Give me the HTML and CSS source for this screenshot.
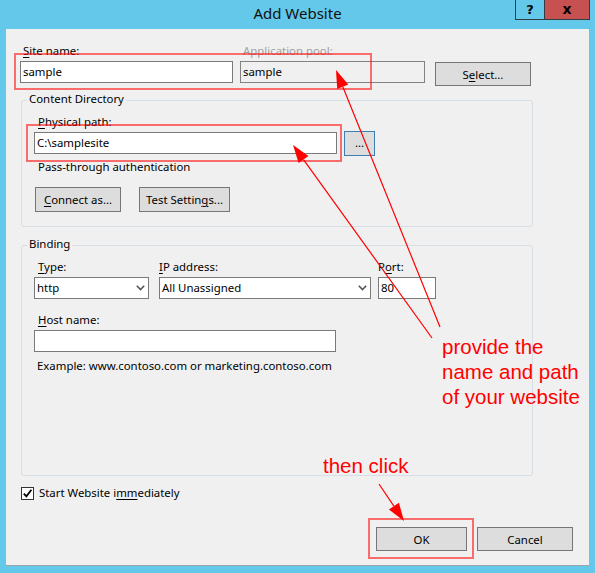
FILE: index.html
```html
<!DOCTYPE html>
<html>
<head>
<meta charset="utf-8">
<title>Add Website</title>
<link rel="stylesheet" href="styles.css">
</head>
<body>
<div class="window">
  <div class="titlebar">
    <div></div>
    <div class="title">Add Website</div>
    <div class="controls">
      <div class="help">?</div>
      <div class="close">x</div>
    </div>
  </div>
  <div class="client">
    <div class="toprow">
      <div class="col site">
        <div class="lbl"><u>S</u>ite name:</div>
        <div class="tb">sample</div>
      </div>
      <div class="col pool">
        <div class="lbl dis">Application pool:</div>
        <div class="tb tb-dis">sample</div>
      </div>
      <div class="btn select">S<u>e</u>lect...</div>
    </div>

    <div class="group content">
      <div class="gtitle">Content Directory</div>
      <div class="lbl lbl-in"><u>P</u>hysical path:</div>
      <div class="pathrow">
        <div class="tb path">C:\samplesite</div>
        <div class="btn browse">...</div>
      </div>
      <div class="note">Pass-through authentication</div>
      <div class="btnrow">
        <div class="btn connect"><u>C</u>onnect as...</div>
        <div class="btn test">Test Settin<u>g</u>s...</div>
      </div>
    </div>

    <div class="group binding">
      <div class="gtitle">Binding</div>
      <div class="bindrow">
        <div class="col type">
          <div class="lbl lbl-in"><u>T</u>ype:</div>
          <div class="tb dd">http<svg class="chev" width="9" height="6" viewBox="0 0 9 6"><polyline points="0.8,0.8 4.5,4.6 8.2,0.8" fill="none" stroke="#555" stroke-width="1.6"/></svg></div>
        </div>
        <div class="col ip">
          <div class="lbl"><u>I</u>P address:</div>
          <div class="tb dd">All Unassigned<svg class="chev" width="9" height="6" viewBox="0 0 9 6"><polyline points="0.8,0.8 4.5,4.6 8.2,0.8" fill="none" stroke="#555" stroke-width="1.6"/></svg></div>
        </div>
        <div class="col port">
          <div class="lbl">P<u>o</u>rt:</div>
          <div class="tb">80</div>
        </div>
      </div>
      <div class="lbl lbl-in host-lbl"><u>H</u>ost name:</div>
      <div class="tb host"></div>
      <div class="note example">Example: www.contoso.com or marketing.contoso.com</div>
    </div>

    <div class="checkrow">
      <div class="checkbox"><svg width="11" height="11" viewBox="0 0 11 11"><polyline points="1.8,5.6 4.4,8.4 9.4,1.8" fill="none" stroke="#000" stroke-width="1.8"/></svg></div>
      <div class="checklabel">Start Website i<u>mm</u>ediately</div>
    </div>

    <div class="footer">
      <div class="btn ok">OK</div>
      <div class="btn cancel">Cancel</div>
    </div>
  </div>
</div>

<svg class="annot" width="595" height="573" viewBox="0 0 595 573">
  <g fill="none" stroke="rgba(255,0,0,0.55)" stroke-width="2">
    <rect x="15" y="54" width="356" height="35"/>
    <rect x="27" y="125" width="314" height="36"/>
    <rect x="369" y="519" width="104" height="39"/>
  </g>
  <g stroke="#ff0000" stroke-width="1.2">
    <line x1="440" y1="327" x2="342.8" y2="86.7"/>
    <line x1="432" y1="338" x2="303.5" y2="159.6"/>
    <line x1="379" y1="484" x2="393.9" y2="506.1"/>
  </g>
  <g fill="#ff0000">
    <polygon points="336,70 348.3,84.4 337.2,89"/>
    <polygon points="293,145 308.4,156.1 298.6,163.1"/>
    <polygon points="404,521 398.9,502.7 388.9,509.5"/>
  </g>
</svg>
<div class="callout provide">provide the<br>name and path<br>of your website</div>
<div class="callout click">then click</div>
</body>
</html>
```

FILE: styles.css
```css
* {
  box-sizing: border-box;
}

body {
  margin: 0;
  width: 595px;
  height: 573px;
  overflow: hidden;
  position: relative;
  background: #63c8ea;
  font-family: "Noto Sans", "Open Sans", sans-serif;
  font-size: 11.4px;
  color: #000;
}

u {
  text-decoration: underline;
  text-underline-offset: 2px;
}

.titlebar {
  display: grid;
  grid-template-columns: 1fr auto 1fr;
  height: 29px;
}

.title {
  font-size: 15px;
  line-height: 26px;
  color: #111;
}

.controls {
  justify-self: end;
  display: flex;
  margin-right: 5px;
  height: 20px;
}

.help,
.close {
  height: 20px;
  border: 1px solid #2f3d44;
  border-top: none;
  display: flex;
  align-items: center;
  justify-content: center;
  font-family: "DejaVu Sans", sans-serif;
  font-weight: bold;
  font-size: 13px;
}

.help {
  width: 29px;
  border-right: none;
  background: #63c8ea;
}

.close {
  width: 46px;
  background: #c75050;
  font-size: 14px;
  padding-bottom: 2px;
}

.client {
  margin: 0 6px;
  height: 536px;
  background: #f0f0f0;
  padding-left: 14px;
  box-shadow: 0 1px 0 #9aa6ac;
}

.toprow {
  display: flex;
  align-items: flex-start;
  padding-top: 14px;
}

.lbl {
  height: 16px;
  line-height: 16px;
  padding-left: 3px;
  margin-bottom: 2px;
  white-space: nowrap;
}

.lbl.dis {
  color: #a0a0a0;
}

.tb {
  height: 22px;
  line-height: 20px;
  border: 1px solid #7a7a7a;
  background: #fff;
  padding-left: 2px;
  white-space: nowrap;
}

.tb.tb-dis {
  background: #f0f0f0;
  border-color: #838383;
}

.site {
  width: 213px;
}

.pool {
  width: 185px;
  margin-left: 7px;
}

.btn {
  display: flex;
  align-items: center;
  justify-content: center;
  background: #dddddd;
  border: 1px solid #767676;
  white-space: nowrap;
}

.select {
  width: 96px;
  height: 24px;
  margin: 19px 0 0 10px;
}

.group {
  margin-left: 1px;
  width: 512px;
  border: 1px solid #d5dfe5;
  border-radius: 3px;
  padding: 0 12px 14px 12px;
}

.gtitle {
  width: fit-content;
  margin: -10px 0 0 -7px;
  padding: 0 2px;
  line-height: 16px;
  background: #f0f0f0;
}

.content {
  margin-top: 14px;
}

.lbl-in {
  padding-left: 4px;
}

.content .lbl {
  margin-top: 7px;
  margin-bottom: 1px;
}

.pathrow {
  display: flex;
  align-items: flex-start;
}

.path {
  width: 303px;
  margin-top: 1px;
}

.browse {
  width: 31px;
  height: 25px;
  margin-left: 7px;
  border-color: #3c7fb1;
  padding-bottom: 3px;
}

.note {
  height: 16px;
  line-height: 16px;
  padding-left: 4px;
  margin-top: 3px;
  white-space: nowrap;
}

.btnrow {
  display: flex;
  gap: 18px;
  margin-top: 12px;
  padding-left: 1px;
}

.btnrow .btn {
  height: 25px;
}

.connect {
  width: 86px;
}

.test {
  width: 91px;
}

.binding {
  margin-top: 18px;
  height: 231px;
}

.bindrow {
  display: flex;
  align-items: flex-start;
  margin-top: 7px;
}

.type {
  width: 115px;
}

.ip {
  width: 212px;
  margin-left: 10px;
}

.ip .lbl,
.port .lbl {
  padding-left: 0;
}

.port {
  width: 58px;
  margin-left: 7px;
}

.dd {
  display: flex;
  align-items: center;
  justify-content: space-between;
  padding-right: 3px;
}

.chev {
  display: block;
}

.host-lbl {
  margin-top: 13px;
}

.host {
  width: 302px;
}

.example {
  margin-top: 6px;
  padding-left: 3px;
}

.checkrow {
  display: flex;
  align-items: center;
  height: 16px;
  margin-top: 9px;
  margin-left: 1px;
}

.checkbox {
  width: 13px;
  height: 13px;
  border: 1px solid #333;
  background: #fff;
  display: flex;
  align-items: center;
  justify-content: center;
}

.checkbox svg {
  display: block;
}

.checklabel {
  margin-left: 5px;
  line-height: 16px;
}

.footer {
  display: flex;
  justify-content: flex-end;
  gap: 10px;
  margin-top: 26px;
  padding-right: 16px;
}

.footer .btn {
  height: 24px;
}

.ok {
  width: 91px;
}

.cancel {
  width: 96px;
}

.annot {
  position: absolute;
  left: 0;
  top: 0;
  pointer-events: none;
}

.callout {
  position: absolute;
  font-family: "Liberation Sans", Arial, sans-serif;
  font-size: 20.5px;
  line-height: 25px;
  color: #ff0000;
  white-space: nowrap;
}

.provide {
  left: 442px;
  top: 334px;
}

.click {
  left: 323px;
  top: 453px;
}
```
